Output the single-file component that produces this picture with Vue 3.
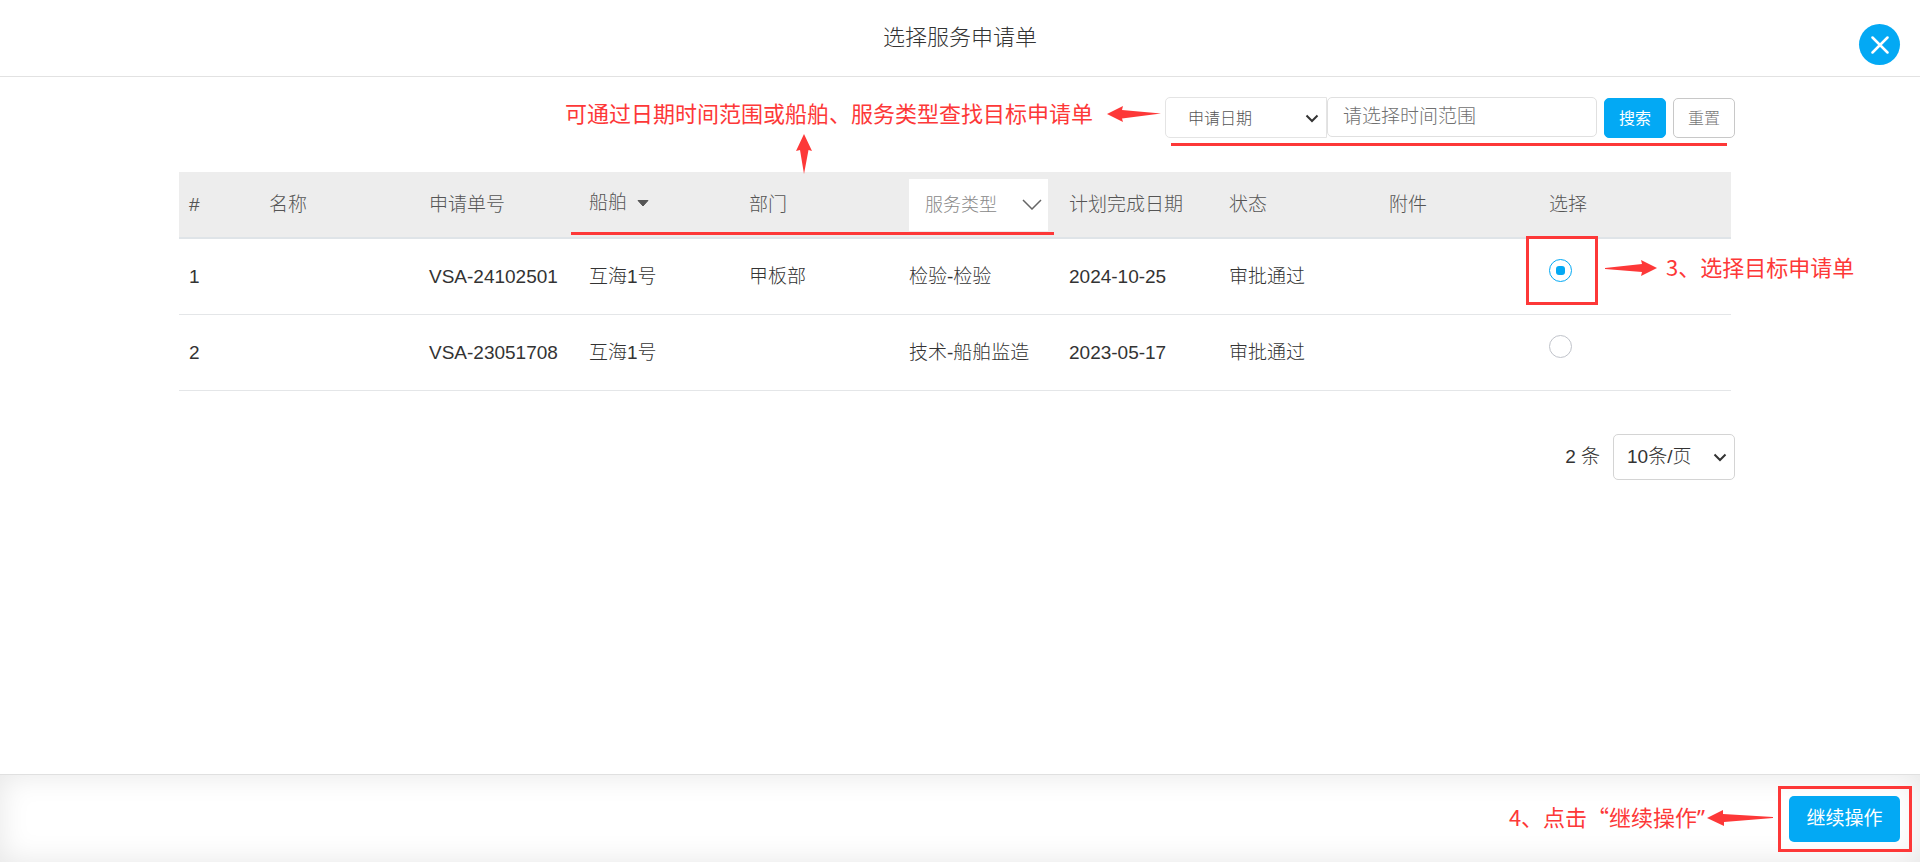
<script setup>
import { ref } from 'vue'

const columns = ['#', '名称', '申请单号', '船舶', '部门', '服务类型', '计划完成日期', '状态', '附件', '选择']
const rows = [
  { id: 1, name: '', no: 'VSA-24102501', ship: '互海1号', dept: '甲板部', type: '检验-检验', date: '2024-10-25', status: '审批通过' },
  { id: 2, name: '', no: 'VSA-23051708', ship: '互海1号', dept: '', type: '技术-船舶监造', date: '2023-05-17', status: '审批通过' },
]
const picked = ref(1)
const dateRange = ref('')
</script>

<template>
  <div class="dialog">
    <header class="head">
      <h1>选择服务申请单</h1>
      <button class="close" type="button" aria-label="关闭">
        <svg viewBox="0 0 18 18" width="18" height="18"><path d="M1.5 1.5 L16.5 16.5 M16.5 1.5 L1.5 16.5" /></svg>
      </button>
    </header>

    <main class="body">
      <form class="filters" @submit.prevent>
        <div class="select date-kind">
          <select aria-label="日期类型"><option>申请日期</option></select>
          <svg class="chev" viewBox="0 0 14 9" width="14" height="9"><path d="M1.5 1.5 L7 7 L12.5 1.5" /></svg>
        </div>
        <input v-model="dateRange" class="range" type="text" placeholder="请选择时间范围" aria-label="时间范围" />
        <button class="btn primary" type="submit">搜索</button>
        <button class="btn plain" type="reset">重置</button>
        <div class="note note-filter">
          <span class="words">可通过日期时间范围或船舶、服务类型查找目标申请单</span>
          <svg viewBox="0 0 54 16" width="54" height="16"><path d="M0 8 L16 0 L15 4 L54 7.5 L15 12.5 L16 16 Z" /></svg>
        </div>
        <svg class="arrow-up" viewBox="0 0 16 40" width="16" height="40"><path d="M8 0 L16 17 L12.5 16 L8 40 L4 16 L0 17 Z" /></svg>
        <div class="line line-filter"></div>
      </form>

      <div class="table-wrap">
        <table>
          <colgroup>
            <col class="c-index" />
            <col v-for="n in 8" :key="n" class="c-mid" />
            <col />
          </colgroup>
          <thead>
            <tr>
              <th v-for="c in columns" :key="c" scope="col">
                <button v-if="c === '船舶'" class="sort" type="button">
                  船舶
                  <svg viewBox="0 0 12 7" width="12" height="7"><path d="M1 0.5 H11 L6 6 Z" /></svg>
                </button>
                <div v-else-if="c === '服务类型'" class="select kind">
                  <select aria-label="服务类型"><option>服务类型</option></select>
                  <svg class="chev" viewBox="0 0 20 11" width="20" height="11"><path d="M1 1 L10 10 L19 1" /></svg>
                </div>
                <template v-else>{{ c }}</template>
              </th>
            </tr>
          </thead>
          <tbody>
            <tr v-for="r in rows" :key="r.id">
              <td>{{ r.id }}</td>
              <td>{{ r.name }}</td>
              <td>{{ r.no }}</td>
              <td>{{ r.ship }}</td>
              <td>{{ r.dept }}</td>
              <td>{{ r.type }}</td>
              <td>{{ r.date }}</td>
              <td>{{ r.status }}</td>
              <td></td>
              <td class="choose">
                <div class="pick">
                  <input v-model="picked" type="radio" name="request" :value="r.id" :aria-label="r.no" />
                  <template v-if="r.id === 1">
                    <div class="frame frame-pick"></div>
                    <div class="note note-pick">
                      <svg viewBox="0 0 52 16" width="52" height="16"><path d="M52 8 L36 0 L37 4 L0 8 L0 9 L37 12 L36 16 Z" /></svg>
                      <span class="words">3、选择目标申请单</span>
                    </div>
                  </template>
                </div>
              </td>
            </tr>
          </tbody>
        </table>
        <div class="line line-head"></div>
      </div>

      <div class="pager">
        <span>2 条</span>
        <div class="select size">
          <select aria-label="每页条数"><option>10条/页</option></select>
          <svg class="chev" viewBox="0 0 14 9" width="14" height="9"><path d="M1.5 1.5 L7 7 L12.5 1.5" /></svg>
        </div>
      </div>
    </main>

    <footer class="foot">
      <div class="go-wrap">
        <button class="go" type="button">继续操作</button>
        <div class="frame frame-go"></div>
        <div class="note note-go">
          <span class="words">4、点击“继续操作<span class="quote">”</span></span>
          <svg viewBox="0 0 66 16" width="66" height="16"><path d="M0 8 L16 0 L16 4 L66 7 L66 8 L17 12 L17 16 Z" /></svg>
        </div>
      </div>
    </footer>
  </div>
</template>

<style>
body {
  margin: 0;
  background: #fff;
}
</style>

<style scoped>
* {
  box-sizing: border-box;
}
.dialog {
  display: flex;
  flex-direction: column;
  min-height: 100vh;
  padding-bottom: 5px;
  font-family: "Liberation Sans", "Noto Sans CJK SC", sans-serif;
  font-size: 19px;
  font-weight: 300;
  line-height: 28px;
  color: #333;
}
button, input, select {
  font: inherit;
  margin: 0;
}
svg {
  display: block;
  flex: none;
}
.head {
  display: flex;
  justify-content: center;
  position: relative;
  height: 77px;
  padding-top: 24px;
  border-bottom: 1px solid #e2e2e2;
}
h1 {
  margin: 0;
  font-size: 22px;
  font-weight: 300;
  line-height: 28px;
}
.close {
  position: absolute;
  top: 24px;
  right: 20px;
  display: flex;
  align-items: center;
  justify-content: center;
  width: 41px;
  height: 41px;
  padding: 0;
  border: 0;
  border-radius: 50%;
  background: #03a9f4;
}
.close path {
  fill: none;
  stroke: #fff;
  stroke-width: 2.5;
  stroke-linecap: round;
}
.body {
  flex: 1;
  padding: 20px 185px 0 179px;
}
.filters {
  position: relative;
  z-index: 1;
  display: flex;
  justify-content: flex-end;
  align-items: flex-start;
  height: 75px;
}
.select {
  position: relative;
}
.select select {
  appearance: none;
  display: block;
  width: 100%;
  height: 100%;
  border: 0;
  background: transparent;
  color: inherit;
}
.chev {
  position: absolute;
  pointer-events: none;
  top: calc(50% - 4px);
  right: 7px;
}
.chev path {
  fill: none;
  stroke: #333;
  stroke-width: 2;
}
.date-kind {
  width: 162px;
  height: 41px;
  border: 1px solid #e4e4e4;
  border-radius: 5px 0 0 5px;
  font-size: 16px;
  color: #555;
}
.date-kind select {
  padding: 2px 22px 0;
}
.range {
  width: 270px;
  height: 40px;
  padding: 0 15px;
  border: 1px solid #e0e0e0;
  border-radius: 5px;
  outline: 0;
  color: #333;
}
.range::placeholder {
  color: #707070;
  opacity: 1;
}
.btn {
  width: 62px;
  height: 40px;
  margin-top: 1px;
  margin-left: 7px;
  padding: 2px 0 0;
  border: 1px solid #c8c8c8;
  border-radius: 5px;
  background: #fff;
  color: #777;
  font-size: 16px;
}
.primary {
  border-color: #03a9f4;
  background: #03a9f4;
  color: #fff;
  font-weight: 400;
}
.note {
  position: absolute;
  display: flex;
  align-items: center;
  font-family: "Noto Sans CJK SC", sans-serif;
  font-size: 22px;
  font-weight: 400;
  line-height: 32px;
  white-space: nowrap;
  color: #fd3838;
}
.words {
  padding-bottom: 4px;
}
.quote {
  font-family: "Noto Sans", sans-serif;
}
.note path, .arrow-up path {
  fill: #fd3838;
}
.note-filter {
  top: -1px;
  right: 574px;
  gap: 14px;
}
.arrow-up {
  position: absolute;
  top: 37px;
  right: 923px;
}
.line {
  position: absolute;
  height: 3px;
  background: #fd3838;
}
.line-filter {
  top: 46px;
  right: 8px;
  width: 556px;
}
.line-head {
  top: 60px;
  left: 392px;
  width: 483px;
}
.table-wrap {
  position: relative;
  margin-right: 4px;
}
table {
  width: 100%;
  table-layout: fixed;
  border-collapse: separate;
  border-spacing: 0;
}
.c-index {
  width: 80px;
}
.c-mid {
  width: 160px;
}
th {
  height: 67px;
  padding: 0 10px;
  border-bottom: 2px solid #dfe4e8;
  background: #ededed;
  font-weight: 300;
  text-align: left;
  white-space: nowrap;
  color: #555;
}
td {
  height: 76px;
  padding: 0 10px;
  border-bottom: 1px solid #e4e6e8;
  white-space: nowrap;
}
.sort {
  display: flex;
  align-items: center;
  gap: 10px;
  padding: 0 0 3px;
  border: 0;
  background: none;
  color: inherit;
}
.sort path {
  fill: #555;
  stroke: #555;
  stroke-linejoin: round;
}
.kind {
  width: 139px;
  height: 52px;
  background: #fff;
  color: #888;
  font-size: 18px;
}
.kind select {
  padding: 0 16px;
}
.kind .chev {
  top: calc(50% - 6px);
  right: 6px;
}
.kind .chev path {
  stroke: #666;
  stroke-width: 1.5;
}
.choose {
  padding-bottom: 12px;
}
.pick {
  position: relative;
  width: 23px;
  height: 23px;
}
.pick input {
  appearance: none;
  display: flex;
  align-items: center;
  justify-content: center;
  width: 23px;
  height: 23px;
  border: 1px solid #c0c3ca;
  border-radius: 50%;
}
.pick input:checked {
  border-color: #03a9f4;
}
.pick input:checked::before {
  content: "";
  width: 9px;
  height: 9px;
  border-radius: 3px;
  background: #03a9f4;
}
.frame {
  position: absolute;
  border: 3px solid #fd3838;
  pointer-events: none;
}
.frame-pick {
  top: -23px;
  left: -23px;
  width: 72px;
  height: 69px;
}
.note-pick {
  top: -9px;
  left: 56px;
  gap: 9px;
}
.pager {
  display: flex;
  justify-content: flex-end;
  align-items: center;
  gap: 13px;
  margin-top: 43px;
}
.size {
  width: 122px;
  height: 46px;
  border: 1px solid #d4d4d4;
  border-radius: 5px;
}
.size select {
  padding: 0 13px;
}
.foot {
  display: flex;
  justify-content: flex-end;
  align-items: center;
  height: 88px;
  padding-right: 20px;
  border-top: 1px solid #e0e0e0;
  box-shadow: inset 0 0 30px rgba(0, 0, 0, 0.1);
}
.go-wrap {
  position: relative;
}
.go {
  display: block;
  width: 111px;
  height: 46px;
  padding: 0;
  border: 0;
  border-radius: 5px;
  background: #03a9f4;
  color: #fff;
  font-weight: 400;
}
.frame-go {
  top: -10px;
  left: -11px;
  width: 134px;
  height: 66px;
}
.note-go {
  top: 4px;
  right: 127px;
  gap: 2px;
}
</style>
